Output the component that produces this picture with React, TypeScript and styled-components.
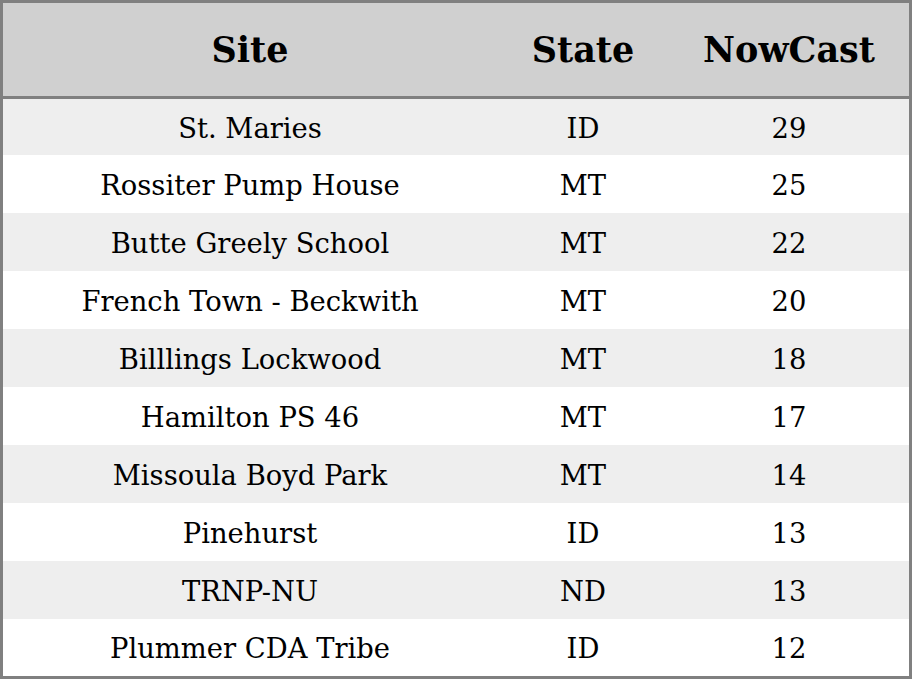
import React from "react";
import styled, { createGlobalStyle } from "styled-components";

interface SiteRow {
  site: string;
  state: string;
  nowcast: number;
}

const rows: SiteRow[] = [
  { site: "St. Maries", state: "ID", nowcast: 29 },
  { site: "Rossiter Pump House", state: "MT", nowcast: 25 },
  { site: "Butte Greely School", state: "MT", nowcast: 22 },
  { site: "French Town - Beckwith", state: "MT", nowcast: 20 },
  { site: "Billlings Lockwood", state: "MT", nowcast: 18 },
  { site: "Hamilton PS 46", state: "MT", nowcast: 17 },
  { site: "Missoula Boyd Park", state: "MT", nowcast: 14 },
  { site: "Pinehurst", state: "ID", nowcast: 13 },
  { site: "TRNP-NU", state: "ND", nowcast: 13 },
  { site: "Plummer CDA Tribe", state: "ID", nowcast: 12 },
];

const GlobalStyle = createGlobalStyle`
  html, body {
    margin: 0;
    padding: 0;
    background: #ffffff;
  }
  * {
    box-sizing: border-box;
  }
`;

const Table = styled.div`
  width: 100vw;
  height: 100vh;
  border: 3px solid #808080;
  display: grid;
  grid-template-columns: 494px 172px 1fr;
  grid-template-rows: 96px 56px repeat(8, 58px) 1fr;
  font-family: "DejaVu Serif", "Liberation Serif", serif;
  color: #000000;
`;

const HeadCell = styled.div`
  display: flex;
  align-items: center;
  justify-content: center;
  background-color: #d0d0d0;
  border-bottom: 3px solid #808080;
  font-size: 35px;
  font-weight: bold;
`;

const Cell = styled.div<{ striped: boolean }>`
  display: flex;
  align-items: center;
  justify-content: center;
  padding-top: 2px;
  background-color: ${(props) => (props.striped ? "#eeeeee" : "#ffffff")};
  font-size: 27.4px;
`;

const App: React.FC = () => {
  return (
    <>
      <GlobalStyle />
      <Table>
        <HeadCell>Site</HeadCell>
        <HeadCell>State</HeadCell>
        <HeadCell>NowCast</HeadCell>
        {rows.map((row, i) => (
          <React.Fragment key={row.site}>
            <Cell striped={i % 2 === 0}>{row.site}</Cell>
            <Cell striped={i % 2 === 0}>{row.state}</Cell>
            <Cell striped={i % 2 === 0}>{row.nowcast}</Cell>
          </React.Fragment>
        ))}
      </Table>
    </>
  );
};

export default App;
